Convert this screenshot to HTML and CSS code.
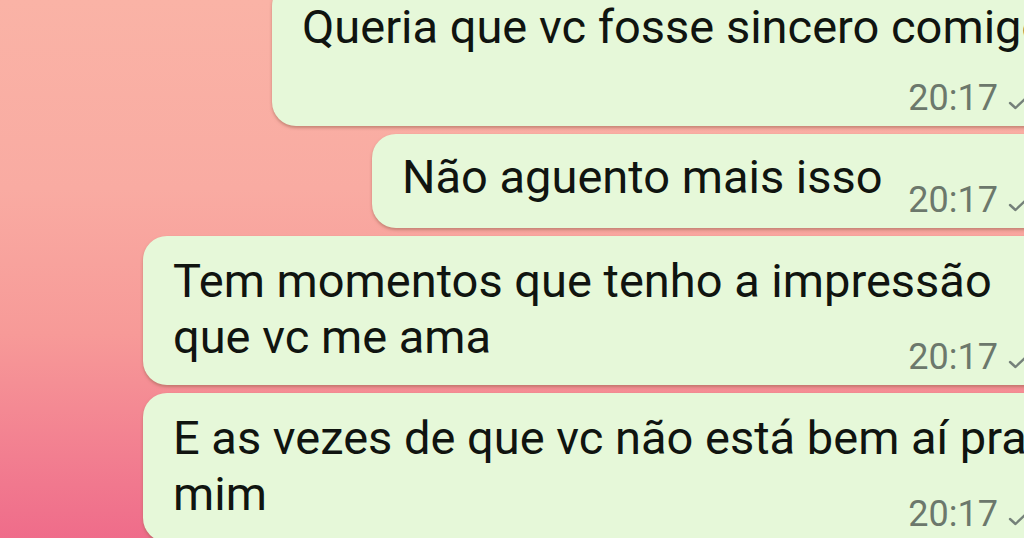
FILE: index.html
```html
<!DOCTYPE html>
<html lang="pt-BR">
<head>
    <meta charset="UTF-8">
    <meta name="viewport" content="width=device-width, initial-scale=1.0">
    <title>Conversa</title>
    <link rel="stylesheet" href="styles.css">
</head>
<body>
    <div class="chat">
        <div class="bubble bubble-first">
            <p class="text">Queria que vc fosse sincero comigo</p>
            <div class="meta meta-below">
                <span class="time">20:17</span>
                <svg class="tick" viewBox="0 0 20 14"><polyline points="2,7 7.5,12 18,2"/></svg>
            </div>
        </div>

        <div class="bubble bubble-short">
            <p class="text">Não aguento mais isso</p>
            <div class="meta meta-inline">
                <span class="time">20:17</span>
                <svg class="tick" viewBox="0 0 20 14"><polyline points="2,7 7.5,12 18,2"/></svg>
            </div>
        </div>

        <div class="bubble bubble-wide">
            <p class="text">Tem momentos que tenho a impressão<br>que vc me ama</p>
            <div class="meta">
                <span class="time">20:17</span>
                <svg class="tick" viewBox="0 0 20 14"><polyline points="2,7 7.5,12 18,2"/></svg>
            </div>
        </div>

        <div class="bubble bubble-wide">
            <p class="text">E as vezes de que vc não está bem aí pra<br>mim</p>
            <div class="meta">
                <span class="time">20:17</span>
                <svg class="tick" viewBox="0 0 20 14"><polyline points="2,7 7.5,12 18,2"/></svg>
            </div>
        </div>
    </div>
</body>
</html>
```

FILE: styles.css
```css
html, body {
    height: 100%;
}
body {
    margin: 0;
    overflow: hidden;
    font-family: Roboto, "Noto Sans", Arial, sans-serif;
    background: linear-gradient(to bottom, #fab3a6 0%, #f9aba2 35%, #f79a98 62%, #f27e90 85%, #ef6c8a 100%);
}
.chat {
    display: flex;
    flex-direction: column;
    align-items: flex-end;
    gap: 8px;
    margin-top: -18px;
    margin-right: -40px; /* bubbles run off the right edge */
}
.bubble {
    box-sizing: border-box;
    background-color: #e6f8d9;
    border-radius: 24px;
    padding: 17px 36px 8px 30px;
    box-shadow: 0 2px 3px rgba(150, 95, 75, 0.5);
    overflow: hidden;
}
.bubble-first {
    width: 792px;
}
.bubble-short {
    width: 692px;
    display: flex;
    align-items: flex-start;
    padding-top: 15px;
}
.bubble-wide {
    width: 921px;
}
.text {
    margin: 0;
    font-size: 47px;
    line-height: 56px;
    color: #101410;
    white-space: nowrap;
}
.meta {
    display: flex;
    justify-content: flex-end;
    align-items: baseline;
    margin-top: -28px;
}
.meta-below {
    margin-top: 23px;
}
.meta-inline {
    margin-top: 31px;
    margin-left: auto;
}
.time {
    font-size: 36px;
    line-height: 40px;
    color: #6c786c;
}
.tick {
    width: 20px;
    height: 14px;
    margin-left: 10px;
    fill: none;
    stroke: #75817a;
    stroke-width: 2.4;
    stroke-linecap: round;
    stroke-linejoin: round;
}
```
